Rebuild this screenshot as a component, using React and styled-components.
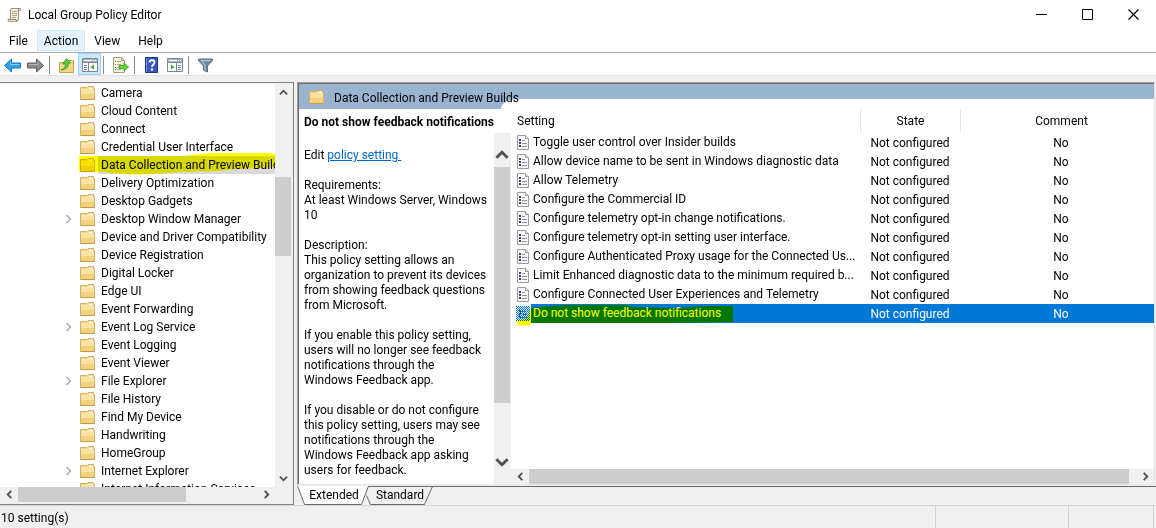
import React from "react";
import styled, { createGlobalStyle, css } from "styled-components";

const GlobalStyle = createGlobalStyle`
  *, *::before, *::after { box-sizing: border-box; }
  body {
    margin: 0;
    background: #f0f0f0;
    color: #000;
    font: 12px/18px Roboto, "Open Sans", sans-serif;
  }
  button { font: inherit; color: inherit; border: 0; padding: 0; background: none; }
  svg { display: block; flex: none; }
`;

const Window = styled.div`
  display: flex;
  flex-direction: column;
  height: 100vh;
  overflow: hidden;
`;

const TitleBar = styled.header`
  display: flex;
  align-items: center;
  flex: none;
  height: 30px;
  padding-left: 7px;
  background: #fff;
`;

const Title = styled.h1`
  flex: 1;
  margin: 0 0 0 6px;
  font-size: 12px;
  font-weight: 400;
`;

const WindowButton = styled.button`
  display: flex;
  align-items: center;
  justify-content: center;
  width: 46px;
  height: 28px;
  margin-bottom: 2px;
`;

const MenuBar = styled.nav`
  display: flex;
  flex: none;
  height: 23px;
  padding-bottom: 1px;
  background: #fff;
  border-bottom: 1px solid #a8a8a8;
`;

const MenuButton = styled.button`
  padding: 0 ${(p) => (p.$active ? 6 : 8)}px;
  border: 1px solid ${(p) => (p.$active ? "#cce8ff" : "transparent")};
  background: ${(p) => (p.$active ? "#e5f3ff" : "none")};
`;

const Toolbar = styled.div`
  display: flex;
  flex: none;
  height: 22px;
  padding-left: 1px;
  background: #fff;
`;

const ToolButton = styled.button`
  display: flex;
  align-items: center;
  justify-content: center;
  width: 23px;
  height: 22px;
  padding-top: 2px;
  border: 1px solid ${(p) => (p.$active ? "#99d1ff" : "transparent")};
  background: ${(p) => (p.$active ? "#cce8ff" : "none")};
`;

const ToolSeparator = styled.span`
  width: 1px;
  height: 18px;
  margin: 3px 5px 0 2px;
  background: #8c8c8c;
`;

const Main = styled.main`
  display: flex;
  flex: 1;
  gap: 3px;
  min-height: 0;
  padding-top: 6px;
  border-top: 1px solid #e3e3e3;
`;

const TreePane = styled.section`
  display: flex;
  flex-direction: column;
  flex: none;
  width: 294px;
  padding: 1px 1px 2px 0;
  border: solid #828282;
  border-width: 1px 1px 1px 0;
`;

const TreeBody = styled.div`
  display: flex;
  flex: 1;
  min-height: 0;
`;

const Tree = styled.ul`
  flex: 1;
  min-width: 0;
  margin: 0;
  padding: 0;
  overflow: hidden;
  list-style: none;
  background: #fff;
`;

const TreeItem = styled.li`
  display: flex;
  align-items: center;
  position: relative;
  height: 18px;
  white-space: nowrap;
`;

const Expander = styled.span`
  flex: none;
  width: 14px;
  margin-left: 66px;
`;

const TreeLabel = styled.span`
  flex: 1;
  margin-left: 3px;
  padding-left: 3px;
  background: ${(p) => (p.$selected ? "#d9d9d9" : "none")};
`;

const Marker = styled.svg`
  position: absolute;
  left: ${(p) => p.$left}px;
  top: ${(p) => p.$top}px;
  mix-blend-mode: multiply;
  pointer-events: none;
`;

const TreeFooter = styled.div`
  flex: none;
  padding-right: 17px;
  background: #f0f0f0;
`;

const Scroll = styled.div`
  display: flex;
  flex: none;
  background: #f0f0f0;
  ${(p) =>
    p.$vertical
      ? css`
          flex-direction: column;
          width: 17px;
          padding: ${p.$inset || 0}px 1px ${p.$inset || 0}px 0;
        `
      : css`
          height: 15px;
        `}
`;

const ScrollButton = styled.button`
  display: flex;
  align-items: center;
  justify-content: center;
  flex: none;
  width: ${(p) => (p.$vertical ? "auto" : "18px")};
  height: ${(p) => (p.$vertical ? (p.$large ? "24px" : "17px") : "auto")};
`;

const ScrollGap = styled.span`
  flex: ${(p) => p.$size} 1 0;
`;

const ScrollThumb = styled(ScrollGap)`
  background: #cdcdcd;
`;

const RightColumn = styled.section`
  display: flex;
  flex-direction: column;
  flex: 1;
  min-width: 0;
`;

const Frame = styled.div`
  display: flex;
  flex-direction: column;
  flex: 1;
  min-height: 0;
  margin-right: 1px;
  border: 1px solid #a0a0a0;
  border-right-color: #e3e3e3;
  border-bottom-color: #e3e3e3;
  box-shadow: inset 1px 1px 0 #696969;
  padding: 1px 0 0 1px;
  background: #fff;
`;

const PaneHeader = styled.div`
  display: flex;
  align-items: center;
  flex: none;
  height: 25px;
  padding-left: 10px;
  background: #99b4d1;
`;

const PaneTitle = styled.h2`
  position: relative;
  z-index: 1;
  margin: 2px 0 0 10px;
  font-size: 12px;
  font-weight: 400;
`;

const FrameBody = styled.div`
  display: flex;
  flex: 1;
  min-height: 0;
`;

const DetailColumn = styled.div`
  display: flex;
  flex-direction: column;
  flex: none;
  width: 212px;
`;

const DetailTitle = styled.h3`
  flex: none;
  height: 24px;
  margin: 0;
  padding: 4px 0 0 5px;
  font-size: 12px;
  font-weight: 700;
  white-space: nowrap;
`;

const DetailBody = styled.div`
  display: flex;
  flex: 1;
  min-height: 0;
`;

const DetailText = styled.div`
  flex: 1;
  min-width: 0;
  padding: 15px 0 0 5px;
  overflow: hidden;
  line-height: 15px;
  white-space: nowrap;
`;

const Paragraph = styled.p`
  margin: 0 0 15px;
`;

const PolicyLink = styled.a`
  color: #0066cc;
  white-space: pre;
`;

const ListColumn = styled.div`
  display: flex;
  flex-direction: column;
  flex: 1;
  min-width: 0;
  margin-top: -10px;
  position: relative;

  &::before {
    content: "";
    position: absolute;
    top: 0;
    left: -10px;
    right: 0;
    height: 10px;
    background: #fff;
    border-radius: 16px 0 0 0 / 10px 0 0 0;
  }
`;

const TableArea = styled.div`
  flex: 1;
  min-height: 0;
  overflow: hidden;
  position: relative;
`;

const Table = styled.table`
  width: 100%;
  table-layout: fixed;
  border-collapse: collapse;
`;

const HeadCell = styled.th`
  width: ${(p) => p.$width || "auto"};
  height: 34px;
  padding: 10px 0 0;
  font-weight: 400;
`;

const HeadLabel = styled.div`
  height: 24px;
  padding-left: ${(p) => (p.$first ? 5 : 0)}px;
  border-left: 1px solid ${(p) => (p.$first ? "transparent" : "#e5e5e5")};
  line-height: 24px;
  text-align: ${(p) => (p.$first ? "left" : "center")};
  text-indent: ${(p) => (p.$last ? 8 : 0)}px;
`;

const Cell = styled.td`
  height: 19px;
  padding: 0;
  text-align: center;
  white-space: nowrap;
  color: ${(p) => (p.$selected ? "#fff" : "inherit")};
  background: ${(p) => (p.$selected ? "#0078d7" : "none")};
  text-indent: ${(p) => (p.$last ? 8 : 0)}px;
`;

const SettingCell = styled.td`
  height: 19px;
  padding: 0;
`;

const Setting = styled.div`
  display: flex;
  align-items: center;
  position: relative;
  padding-left: 5px;
`;

const SettingName = styled.span`
  flex: 1;
  margin-left: 1px;
  padding-left: 2px;
  line-height: 19px;
  white-space: nowrap;
  color: ${(p) => (p.$selected ? "#fff" : "inherit")};
  background: ${(p) => (p.$selected ? "#0078d7" : "none")};
`;

const Tabs = styled.div`
  display: flex;
  flex: none;
  height: 20px;
  padding-top: 1px;
`;

const Tab = styled.button`
  position: relative;
  width: ${(p) => p.$width}px;
  height: 19px;
  line-height: 19px;
`;

const TabShape = styled.svg`
  position: absolute;
  inset: 0;
  overflow: visible;
`;

const TabText = styled.span`
  position: relative;
  left: 2px;
`;

const TabLine = styled.span`
  flex: 1;
  height: 1px;
  background: #696969;
`;

const StatusBar = styled.footer`
  display: flex;
  flex: none;
  height: 23px;
  padding-right: 2px;
  border-top: 1px solid #d7d7d7;
`;

const StatusText = styled.span`
  flex: 1;
  padding: 3px 0 0 1px;
`;

const StatusPart = styled.span`
  width: ${(p) => p.$width}px;
  border-left: 1px solid #d0d0d0;
  border-right: ${(p) => (p.$last ? "1px solid #d0d0d0" : "0")};
`;

const arrows = {
  up: "M1 7L5 3L9 7",
  down: "M1 3L5 7L9 3",
  left: "M7 1L3 5L7 9",
  right: "M3 1L7 5L3 9",
};

function Arrow({ dir, large }) {
  const size = large ? 14 : 9;
  return (
    <svg width={size} height={size} viewBox="0 0 10 10" fill="none">
      <path d={arrows[dir]} stroke="#505050" strokeWidth="2" />
    </svg>
  );
}

function ScrollBar({ vertical, large, inset, before, thumb, after }) {
  return (
    <Scroll $vertical={vertical} $inset={inset}>
      <ScrollButton $vertical={vertical} $large={large} aria-label="Scroll back">
        <Arrow dir={vertical ? "up" : "left"} large={large} />
      </ScrollButton>
      <ScrollGap $size={before} />
      <ScrollThumb $size={thumb} />
      <ScrollGap $size={after} />
      <ScrollButton $vertical={vertical} $large={large} aria-label="Scroll forward">
        <Arrow dir={vertical ? "down" : "right"} large={large} />
      </ScrollButton>
    </Scroll>
  );
}

function FolderIcon() {
  return (
    <svg width="15" height="14" viewBox="0 0 15 14">
      <path d="M.5 1.500h6.500l1-1h5.500v2h1v11H.5z" fill="#f4d88a" stroke="#d3b067" />
      <path d="M1 3h6.500l1-1.500h4.500V3h1v9.500H1z" fill="#f9e2a2" />
      <path d="M9 2.500h4" stroke="#fffdf2" />
      <path d="M1 8h13v5H1z" fill="#f2d27c" />
      <path d="M.5 13.500h14" stroke="#c29c4c" />
    </svg>
  );
}

function PolicyIcon() {
  return (
    <svg width="14" height="15" viewBox="0 0 14 15">
      <path d="M1.500.5h8l3 3v11h-11z" fill="#fbfbfd" stroke="#9a9a9a" />
      <path d="M9.500.5v3h3" fill="#e8e8e8" stroke="#9a9a9a" />
      <path d="M3 4h2v2H3zM3 7h2v2H3zM3 10h2v2H3z" fill="#3c4258" />
      <path d="M6 5.500h3M6 8.500h5M6 11.500h5" stroke="#8c92a4" />
    </svg>
  );
}

function SelectedPolicyIcon() {
  return (
    <svg width="14" height="15" viewBox="0 0 14 15" shapeRendering="crispEdges">
      <defs>
        <pattern id="dither" width="2" height="2" patternUnits="userSpaceOnUse">
          <path d="M0 0h1v1H0zM1 1h1v1H1z" fill="#0078d7" />
        </pattern>
      </defs>
      <path d="M1 0h9l3 3v12H1z" fill="#dfe9f2" />
      <path d="M3 4h2v2H3zM3 7h2v2H3zM3 10h2v2H3z" fill="#3c4258" />
      <path d="M6 5.500h3M6 8.500h5M6 11.500h5" stroke="#505a70" />
      <path d="M0 0h14v15H0z" fill="url(#dither)" />
    </svg>
  );
}

function ScrollAppIcon() {
  return (
    <svg width="15" height="16" viewBox="0 0 15 16">
      <path d="M4 1.500h9.500v2h-2v9.500l-1.500 1.500H1.500l-.5-2h2.500V3z" fill="#f4ecdb" stroke="#a3957e" />
      <path d="M1 12.500h8l1 2M11.500 3.500V1.500" fill="none" stroke="#8d7e68" />
      <path d="M5 4.500h5M5 6.500h5M5 8.500h5M5 10.500h4" stroke="#b3a793" />
    </svg>
  );
}

function ArrowIcon({ forward }) {
  return (
    <svg width="17" height="15" viewBox="0 0 17 15">
      <path
        d={forward ? "M16.500 7.500L9.500 1v4h-9v5h9v4z" : "M.5 7.500L7.500 1v4h9v5h-9v4z"}
        fill={forward ? "#8a8a8a" : "#2ea3e6"}
        stroke={forward ? "#5c5c5c" : "#1874b5"}
      />
      <path d={forward ? "M2 6.500h9V4" : "M15 6.500H6.500V4"} fill="none" stroke={forward ? "#b7b7b7" : "#86d2fa"} />
    </svg>
  );
}

function UpFolderIcon() {
  return (
    <svg width="15" height="15" viewBox="0 0 15 15">
      <path d="M.5 4.500h8l1-2h5v12H.5z" fill="#f3d88a" stroke="#c9a14a" />
      <path d="M10 3.500h3.500" stroke="#fffbe6" />
      <path d="M2 12c3-1 4.500-3 4.500-6H3.500L7.500.5L12 5H9.500c0 4-2.500 7-7.500 7z" fill="#5cc93a" stroke="#2f8f1f" strokeWidth=".7" />
    </svg>
  );
}

function PanelIcon({ mirrored }) {
  return (
    <svg width="16" height="14" viewBox="0 0 16 14">
      <path d="M.5.5h15v13H.5z" fill="#fff" stroke="#7b8793" />
      <path d="M1 1h14v3H1z" fill="#a9b3bd" />
      <path d="M2 2.500h8M11 2.500h1M13 2.500h1" stroke="#fff" />
      <path d="M1 4.500h14" stroke="#7b8793" />
      {mirrored ? (
        <>
          <path d="M9.500 5v8" stroke="#7b8793" />
          <path d="M11 7.500h3M11 9.500h3M11 11.500h3" stroke="#6986a5" />
          <path d="M4 6.500l3.500 2.500L4 11.500z" fill="#35a335" />
        </>
      ) : (
        <>
          <path d="M6.500 5v8" stroke="#7b8793" />
          <path d="M2 7.500h3M2 9.500h3M2 11.500h3" stroke="#6986a5" />
          <path d="M12 6.500L8.500 9l3.500 2.500z" fill="#35a335" />
        </>
      )}
    </svg>
  );
}

function ExportIcon() {
  return (
    <svg width="16" height="16" viewBox="0 0 16 16">
      <path d="M.5.5h8l3 3v12H.5z" fill="#fdf7df" stroke="#a39a80" />
      <path d="M8.500.5v3h3" fill="none" stroke="#a39a80" />
      <path d="M2 4.500h1M2 7.500h1M2 10.500h1M2 12.500h1" stroke="#6b6b6b" />
      <path d="M4 4.500h4M4 7.500h4M4 10.500h3M4 12.500h4" stroke="#b5ad96" />
      <path d="M6 8.500h5V6l4.500 4-4.500 4v-2.500H6z" fill="#62d13f" stroke="#2f9a22" strokeWidth=".8" />
    </svg>
  );
}

function HelpIcon() {
  return (
    <svg width="13" height="16" viewBox="0 0 13 16">
      <path d="M.5.5h12v15H.5z" fill="#3657bd" stroke="#1d3480" />
      <path d="M1.500 1v14" stroke="#7896e6" />
      <path d="M4.500 5.500C4.500 2.500 9.500 2.500 9.500 5.500C9.500 7.500 7 7.500 7 10" fill="none" stroke="#fff" strokeWidth="1.800" />
      <circle cx="7" cy="12.500" r="1.200" fill="#fff" />
    </svg>
  );
}

function FilterIcon() {
  return (
    <svg width="15" height="15" viewBox="0 0 15 15">
      <path d="M.5 1h14v1.500L9.500 8v6l-4-2V8L.5 2.500z" fill="#7890a4" stroke="#536a7d" />
      <path d="M2.500 2.500h10M4 3l3 4.500V12" fill="none" stroke="#bccbd7" />
    </svg>
  );
}

function TreeRowMarker() {
  return (
    <Marker $left={79} $top={-3} width="196" height="22" viewBox="0 0 196 22">
      <path d="M0 3H105C112 2 120 1 132 0H192L196 1V13C184 17 160 15 140 18C120 19 105 18 88 20C65 22 45 22 25 19L0 19z" fill="#ff0" />
    </Marker>
  );
}

function SettingMarker() {
  return (
    <Marker $left={6} $top={0} width="216" height="22" viewBox="0 0 216 22">
      <path d="M14 4C30 2 45 1 58 1H109L115 3L160 4L190 2H216V18L150 19H14V21L2 22L0 19V17L10 15z" fill="#ff0" />
    </Marker>
  );
}

const treeItems = [
  ["Camera"],
  ["Cloud Content"],
  ["Connect"],
  ["Credential User Interface"],
  ["Data Collection and Preview Builds", "selected"],
  ["Delivery Optimization"],
  ["Desktop Gadgets"],
  ["Desktop Window Manager", "parent"],
  ["Device and Driver Compatibility"],
  ["Device Registration"],
  ["Digital Locker"],
  ["Edge UI"],
  ["Event Forwarding"],
  ["Event Log Service", "parent"],
  ["Event Logging"],
  ["Event Viewer"],
  ["File Explorer", "parent"],
  ["File History"],
  ["Find My Device"],
  ["Handwriting"],
  ["HomeGroup"],
  ["Internet Explorer", "parent"],
  ["Internet Information Services"],
];

const settings = [
  "Toggle user control over Insider builds",
  "Allow device name to be sent in Windows diagnostic data",
  "Allow Telemetry",
  "Configure the Commercial ID",
  "Configure telemetry opt-in change notifications.",
  "Configure telemetry opt-in setting user interface.",
  "Configure Authenticated Proxy usage for the Connected Us...",
  "Limit Enhanced diagnostic data to the minimum required b...",
  "Configure Connected User Experiences and Telemetry",
  "Do not show feedback notifications",
];

export default function App() {
  return (
    <Window>
      <GlobalStyle />
      <TitleBar>
        <ScrollAppIcon />
        <Title>Local Group Policy Editor</Title>
        <WindowButton aria-label="Minimize">
          <svg width="11" height="11"><path d="M0 5.500h11" stroke="#000" /></svg>
        </WindowButton>
        <WindowButton aria-label="Maximize">
          <svg width="11" height="11"><path d="M.5.5h10v10H.5z" fill="none" stroke="#000" /></svg>
        </WindowButton>
        <WindowButton aria-label="Close">
          <svg width="11" height="11"><path d="M.5.5l10 10M10.500.5l-10 10" stroke="#000" strokeWidth="1.200" /></svg>
        </WindowButton>
      </TitleBar>
      <MenuBar>
        <MenuButton>File</MenuButton>
        <MenuButton $active>Action</MenuButton>
        <MenuButton>View</MenuButton>
        <MenuButton>Help</MenuButton>
      </MenuBar>
      <Toolbar>
        <ToolButton aria-label="Back"><ArrowIcon /></ToolButton>
        <ToolButton aria-label="Forward"><ArrowIcon forward /></ToolButton>
        <ToolSeparator />
        <ToolButton aria-label="Up one level"><UpFolderIcon /></ToolButton>
        <ToolButton $active aria-label="Console tree"><PanelIcon /></ToolButton>
        <ToolSeparator />
        <ToolButton aria-label="Export list"><ExportIcon /></ToolButton>
        <ToolSeparator />
        <ToolButton aria-label="Help"><HelpIcon /></ToolButton>
        <ToolButton aria-label="Action pane"><PanelIcon mirrored /></ToolButton>
        <ToolSeparator />
        <ToolButton aria-label="Filter"><FilterIcon /></ToolButton>
      </Toolbar>
      <Main>
        <TreePane>
          <TreeBody>
            <Tree>
              {treeItems.map(([name, kind]) => (
                <TreeItem key={name}>
                  <Expander>
                    {kind === "parent" && (
                      <svg width="6" height="10"><path d="M.5 1L4.500 5L.5 9" fill="none" stroke="#a6a6a6" strokeWidth="1.400" /></svg>
                    )}
                  </Expander>
                  <FolderIcon />
                  <TreeLabel $selected={kind === "selected"}>{name}</TreeLabel>
                  {kind === "selected" && <TreeRowMarker />}
                </TreeItem>
              ))}
            </Tree>
            <ScrollBar vertical before={76} thumb={79} after={214} />
          </TreeBody>
          <TreeFooter>
            <ScrollBar before={0} thumb={169} after={71} />
          </TreeFooter>
        </TreePane>
        <RightColumn>
          <Frame>
            <PaneHeader>
              <FolderIcon />
              <PaneTitle>Data Collection and Preview Builds</PaneTitle>
            </PaneHeader>
            <FrameBody>
              <DetailColumn>
                <DetailTitle>Do not show feedback notifications</DetailTitle>
                <DetailBody>
                  <DetailText>
                    <Paragraph>Edit <PolicyLink href="#policy">{"policy setting "}</PolicyLink></Paragraph>
                    <Paragraph>Requirements:<br />At least Windows Server, Windows<br />10</Paragraph>
                    <Paragraph>
                      Description:<br />This policy setting allows an<br />organization to prevent its devices<br />
                      from showing feedback questions<br />from Microsoft.
                    </Paragraph>
                    <Paragraph>
                      If you enable this policy setting,<br />users will no longer see feedback<br />
                      notifications through the<br />Windows Feedback app.
                    </Paragraph>
                    <Paragraph>
                      If you disable or do not configure<br />this policy setting, users may see<br />
                      notifications through the<br />Windows Feedback app asking<br />users for feedback.
                    </Paragraph>
                  </DetailText>
                  <ScrollBar vertical large inset={10} before={0} thumb={237} after={47} />
                </DetailBody>
              </DetailColumn>
              <ListColumn>
                <TableArea>
                  <Table>
                    <thead>
                      <tr>
                        <HeadCell><HeadLabel $first>Setting</HeadLabel></HeadCell>
                        <HeadCell $width="100px"><HeadLabel>State</HeadLabel></HeadCell>
                        <HeadCell $width="194px"><HeadLabel $last>Comment</HeadLabel></HeadCell>
                      </tr>
                    </thead>
                    <tbody>
                      {settings.map((name, i) => {
                        const selected = i === settings.length - 1;
                        return (
                          <tr key={name}>
                            <SettingCell>
                              <Setting>
                                {selected ? <SelectedPolicyIcon /> : <PolicyIcon />}
                                <SettingName $selected={selected}>{name}</SettingName>
                                {selected && <SettingMarker />}
                              </Setting>
                            </SettingCell>
                            <Cell $selected={selected}>Not configured</Cell>
                            <Cell $selected={selected} $last>No</Cell>
                          </tr>
                        );
                      })}
                    </tbody>
                  </Table>
                </TableArea>
                <ScrollBar before={0} thumb={602} after={7} />
              </ListColumn>
            </FrameBody>
          </Frame>
          <Tabs>
            <Tab $width={70}>
              <TabShape width="70" height="19">
                <path d="M.5 0L7.500 18.500H64.500L71.500 0" fill="#fff" stroke="#696969" />
              </TabShape>
              <TabText>Extended</TabText>
            </Tab>
            <Tab $width={62}>
              <TabShape width="62" height="19">
                <path d="M-.5 9.500L3.500 18.500H57.500L65.500.5H1.500" fill="none" stroke="#696969" />
              </TabShape>
              <TabText>Standard</TabText>
            </Tab>
            <TabLine />
          </Tabs>
        </RightColumn>
      </Main>
      <StatusBar>
        <StatusText>10 setting(s)</StatusText>
        <StatusPart $width={133} />
        <StatusPart $width={86} $last />
      </StatusBar>
    </Window>
  );
}
